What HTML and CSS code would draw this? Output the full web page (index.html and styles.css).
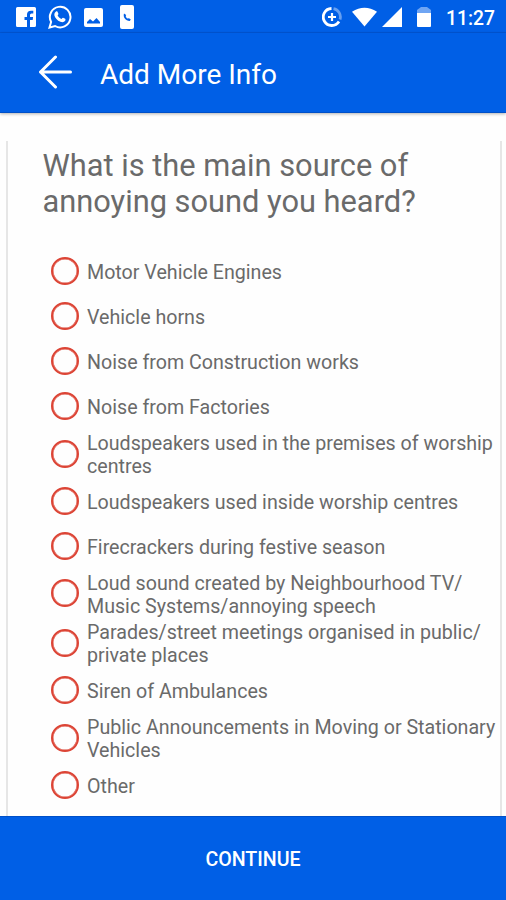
FILE: index.html
```html
<!DOCTYPE html>
<html lang="en">
<head>
  <meta charset="UTF-8" />
  <meta name="viewport" content="width=device-width, initial-scale=1.0" />
  <title>Add More Info</title>
  <link rel="stylesheet" href="styles.css">
</head>
<body>

  <div class="status-bar">
    <div class="status-icons">
      <svg width="20" height="20" viewBox="0 0 20 20"><path fill="#fff" d="M1.500 0h17Q20 0 20 1.500v17Q20 20 18.500 20H14v-7h2.700l.4-3H14V8q0-1.500 1.600-1.500H17.300V3.700H15Q11 3.700 11 7.500V10H8.500v3H11v7H1.500Q0 20 0 18.500v-17Q0 0 1.500 0z"/></svg>
      <svg class="whatsapp" width="24" height="24" viewBox="0 0 24 24"><path fill="none" stroke="#fff" stroke-width="2" d="M1.500 22.500l1.600-5.600A10.300 10.300 0 1 1 7.100 21z"/><path fill="#fff" d="M8 6.500c.5-.4 1.200-.3 1.500.2l.9 2c.2.500-.7 1.300-.8 1.600.8 1.700 2 2.900 3.800 3.700.5-.2 1.100-1.500 1.700-1.200l2.100 1c.5.400.3 1.600-.2 2.200-1 1.200-2.600 1.500-4.600.7-3-1.200-5.500-4-6-6.300-.3-1.600.5-3.200 1.600-3.900z"/></svg>
      <svg class="picture" width="19" height="19" viewBox="0 0 19 19"><rect width="19" height="19" rx="2" fill="#fff"/><path fill="#005fe6" d="M3 15.500v-1.500l3-3 3 2.500 3.500-3.500 3.500 4v1.500z"/></svg>
      <svg class="phone" width="14" height="24" viewBox="0 0 14 24"><rect width="14" height="24" rx="2" fill="#fff"/><path fill="#005fe6" d="M4 8.500C2.800 12 5.500 16 9.800 16l1-1.600-1.800-1.200-1.200.4c-1.200-.5-2-1.500-2.100-2.700l.5-.9z"/></svg>
    </div>
    <div class="status-icons">
      <svg class="saver" width="20" height="20" viewBox="0 0 20 20" fill="none" stroke="#fff"><path stroke-width="2.800" d="M9.500 1.500A8.500 8.500 0 1 0 17 14.500"/><path stroke-width="2.800" opacity=".4" d="M11.500 1.600A8.500 8.500 0 0 1 18 12.500"/><path stroke-width="2.200" d="M10 6v8M6 10h8"/></svg>
      <svg class="wifi" width="25" height="20" viewBox="0 0 26 20"><path fill="#fff" d="M0 4.500Q13-4 26 4.500L13 20z"/></svg>
      <svg class="signal" width="20" height="20" viewBox="0 0 20 20"><path fill="#fff" d="M20 0v20H0z"/></svg>
      <svg class="battery" width="14" height="20" viewBox="0 0 14 20"><path fill="#6fa5f3" d="M4 0h6l4 3v3H0V3z"/><path fill="#fff" d="M0 6h14v13q0 1-1 1H1q-1 0-1-1z"/></svg>
      <span class="clock">11:27</span>
    </div>
  </div>

  <header class="app-bar">
    <svg width="34" height="34" viewBox="0 0 34 34" fill="none" stroke="#fff" stroke-width="3" stroke-linecap="round" stroke-linejoin="round"><path d="M17.500 2L2.500 17l15 15M2.500 17h30"/></svg>
    <h1>Add More Info</h1>
  </header>

  <main class="card">
    <h2>What is the main source of<br>annoying sound you heard?</h2>
    <div class="options">
      <label class="option"><input type="radio" name="source"><span>Motor Vehicle Engines</span></label>
      <label class="option"><input type="radio" name="source"><span>Vehicle horns</span></label>
      <label class="option"><input type="radio" name="source"><span>Noise from Construction works</span></label>
      <label class="option"><input type="radio" name="source"><span>Noise from Factories</span></label>
      <label class="option two-line"><input type="radio" name="source"><span>Loudspeakers used in the premises of worship<br>centres</span></label>
      <label class="option"><input type="radio" name="source"><span>Loudspeakers used inside worship centres</span></label>
      <label class="option"><input type="radio" name="source"><span>Firecrackers during festive season</span></label>
      <label class="option two-line"><input type="radio" name="source"><span>Loud sound created by Neighbourhood TV/<br>Music Systems/annoying speech</span></label>
      <label class="option two-line"><input type="radio" name="source"><span>Parades/street meetings organised in public/<br>private places</span></label>
      <label class="option"><input type="radio" name="source"><span>Siren of Ambulances</span></label>
      <label class="option two-line"><input type="radio" name="source"><span>Public Announcements in Moving or Stationary<br>Vehicles</span></label>
      <label class="option"><input type="radio" name="source"><span>Other</span></label>
    </div>
  </main>

  <button class="continue-button">CONTINUE</button>

</body>
</html>
```
FILE: styles.css
```css
:root {
  --blue: #005fe6;
  --text: #6a6a6a;
  --radio: #dc4435;
  --border: #e6e6e6;
}

* {
  box-sizing: border-box;
}

body {
  font-family: Roboto, sans-serif;
  margin: 0;
  height: 900px;
  display: flex;
  flex-direction: column;
  background: #fefefe;
  color: var(--text);
  overflow: hidden;
}

.status-bar {
  height: 33px;
  flex: none;
  display: flex;
  justify-content: space-between;
  padding: 2px 11px 0 16px;
  background: var(--blue);
  border-bottom: 1px solid #0056d6;
}

.status-icons {
  display: flex;
  align-items: center;
}

.whatsapp { margin-left: 12px; }
.picture { margin-left: 12px; }
.phone { margin-left: 17px; }
.wifi { margin-left: 10px; }
.signal { margin-left: 5px; }
.battery { margin-left: 15px; }

.clock {
  margin-left: 15px;
  padding-top: 3px;
  color: #fff;
  font-size: 19.3px;
  font-weight: 500;
}

.app-bar {
  height: 80px;
  flex: none;
  display: flex;
  align-items: center;
  gap: 28px;
  padding: 0 0 2px 38px;
  background: var(--blue);
  border-bottom: 1px solid #0050c8;
  box-shadow: 0 1px 3px rgba(0,0,0,0.3);
}

h1 {
  margin: 6px 0 0;
  color: #fff;
  font-size: 28px;
  font-weight: 400;
}

.card {
  flex: 1;
  min-height: 0;
  margin: 28px 4px 0 6px;
  padding: 7px 0 0 34.5px;
  border-left: 2px solid var(--border);
  border-right: 2px solid var(--border);
}

h2 {
  margin: 0;
  font-size: 30.8px;
  line-height: 36px;
  font-weight: 400;
  white-space: nowrap;
}

.options {
  margin-top: 28.7px;
  padding-left: 8px;
}

.option {
  height: 45px;
  display: flex;
  align-items: center;
  gap: 8.5px;
  font-size: 19.65px;
  line-height: 23px;
  white-space: nowrap;
}

.option span {
  padding-top: 2.6px;
}

.two-line {
  height: 49.7px;
}

.option input {
  appearance: none;
  flex: none;
  width: 28px;
  height: 28px;
  margin: 0;
  border: 2px solid var(--radio);
  border-radius: 50%;
  box-shadow: inset 0 0 0 0.5px var(--radio);
}

.continue-button {
  height: 84px;
  flex: none;
  padding-top: 3px;
  border: none;
  border-top: 1px solid #0050c8;
  background: var(--blue);
  color: #fff;
  font-family: inherit;
  font-size: 19.6px;
  font-weight: 500;
}
```
